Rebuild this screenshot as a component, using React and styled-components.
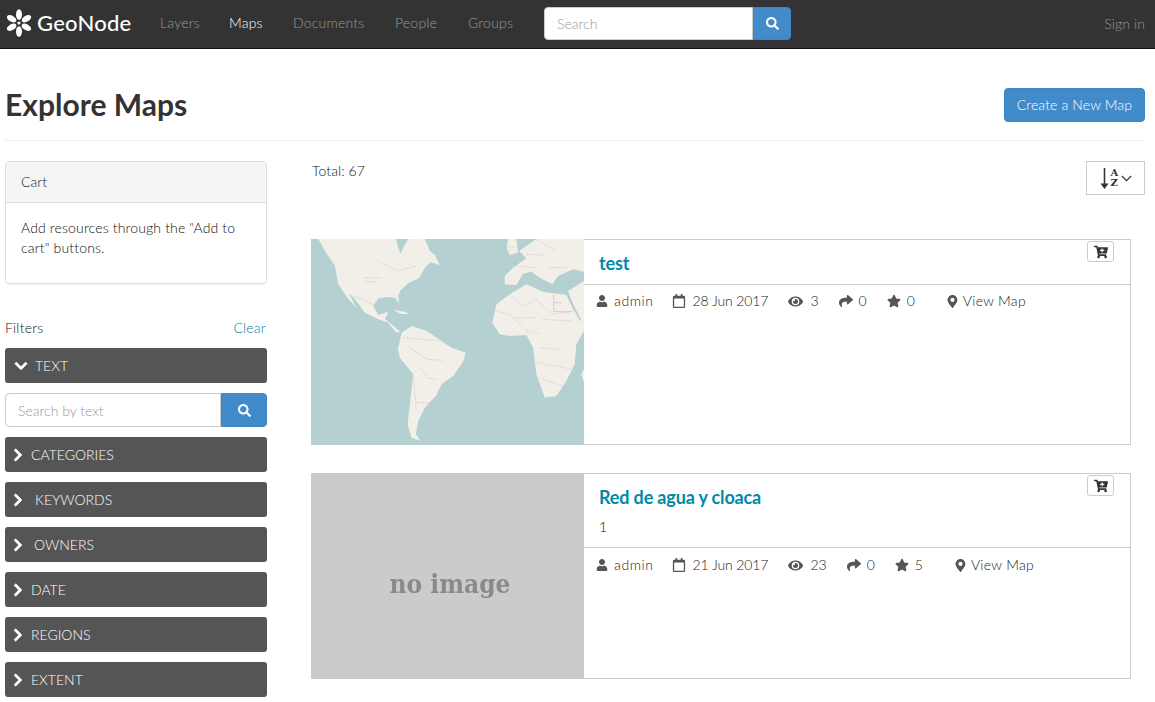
import React from 'react'
import styled, { createGlobalStyle } from 'styled-components'
import {
  FaCartPlus, FaChevronDown, FaChevronRight, FaEye, FaMapMarkerAlt, FaRegCalendar,
  FaSearch, FaShare, FaStar, FaUser,
} from 'react-icons/fa'

const GlobalStyle = createGlobalStyle`
  * { box-sizing: border-box; }
  html, body { margin: 0; padding: 0; background: #fff; }
  body {
    font-family: Lato, "Helvetica Neue", Arial, sans-serif;
    font-size: 14px;
    line-height: 20px;
    color: #333;
    height: 702px;
    overflow: hidden;
  }
`

const Navbar = styled.nav`
  display: flex;
  align-items: center;
  height: 49px;
  padding: 0 10px 2px 5px;
  background: #333;
  border-bottom: 1px solid #111;
`
const Brand = styled.a`
  display: flex;
  align-items: center;
  gap: 4px;
  width: 155px;
  color: #fff;
  font-size: 22px;
  font-weight: 500;
  letter-spacing: 0.25px;
`
const NavLink = styled.a`
  width: ${({ $w }) => $w}px;
  margin-right: 30px;
  font-size: 14px;
  font-weight: 300;
  letter-spacing: 0.2px;
  white-space: nowrap;
  color: ${({ $active }) => ($active ? '#fff' : '#999')};
`
const NavSearch = styled.div`
  display: flex;
  width: 247px;
  height: 33px;
`
const SearchInput = styled.div`
  flex: 1;
  display: flex;
  align-items: center;
  padding: 1px 12px 0;
  background: #fff;
  border: 1px solid #ccc;
  border-radius: 4px 0 0 4px;
  font-weight: 300;
  color: #999;
`
const SearchButton = styled.div`
  display: flex;
  align-items: center;
  justify-content: center;
  width: ${({ $w }) => $w}px;
  background: #428bca;
  border: 1px solid #3f85c2;
  border-radius: 0 4px 4px 0;
  color: #fff;
  font-size: 13px;
`
const SignIn = styled.a`
  margin: 2px 0 0 auto;
  font-weight: 300;
  letter-spacing: 0.1px;
  color: #999;
`

const Page = styled.div`
  padding: 0 10px 0 5px;
`
const PageHeader = styled.header`
  display: flex;
  align-items: center;
  justify-content: space-between;
  height: 92px;
  padding-top: 21px;
  border-bottom: 1px solid #eee;
`
const Title = styled.h1`
  margin: -2px 0 0;
  font-size: 30px;
  line-height: 33px;
  font-weight: 700;
  color: #333;
`
const PrimaryButton = styled.a`
  display: block;
  padding: 6px 12px;
  height: 34px;
  background: #428bca;
  border: 1px solid #3f85c2;
  border-radius: 4px;
  color: #fff;
  font-weight: 300;
  letter-spacing: 0.13px;
`
const Columns = styled.div`
  display: flex;
  margin-top: 20px;
`
const Sidebar = styled.aside`
  width: 262px;
  flex: none;
`
const Panel = styled.section`
  height: 123px;
  border: 1px solid #ddd;
  border-radius: 4px;
  box-shadow: 0 1px 1px rgba(0, 0, 0, 0.05);
`
const PanelHead = styled.div`
  height: 41px;
  padding: 10px 15px;
  background: #f5f5f5;
  border-bottom: 1px solid #ddd;
  border-radius: 3px 3px 0 0;
  font-weight: 300;
  color: #222;
`
const PanelBody = styled.div`
  padding: 15px;
  font-weight: 300;
  letter-spacing: 0.15px;
  color: #111;
`
const FiltersHead = styled.div`
  display: flex;
  justify-content: space-between;
  margin: 34px 0 10px;
  font-weight: 300;
  letter-spacing: 0.2px;
  color: #111;
`
const ClearLink = styled.a`
  color: #007f9c;
  margin-right: 1px;
`
const FilterBar = styled.div`
  display: flex;
  align-items: center;
  height: 35px;
  margin-bottom: 10px;
  padding-left: 9px;
  background: #555;
  border-radius: 3px;
  color: #fff;
  font-weight: 300;
  svg {
    font-size: 14px;
    flex: none;
    margin-left: ${({ $open }) => ($open ? 0 : -3)}px;
    stroke: currentColor;
    stroke-width: 30;
  }
`
const FilterLabel = styled.span`
  margin-left: ${({ $gap }) => $gap}px;
`
const FilterSearch = styled.div`
  display: flex;
  height: 34px;
  margin-bottom: 10px;
`
const Main = styled.main`
  flex: 1;
  padding-left: 44px;
`
const TotalRow = styled.div`
  display: flex;
  justify-content: space-between;
  height: 78px;
`
const TotalText = styled.span`
  padding-left: 1px;
  font-weight: 300;
  letter-spacing: 0.1px;
  color: #111;
`
const SortButton = styled.div`
  display: flex;
  align-items: center;
  justify-content: center;
  width: 59px;
  height: 34px;
  padding-left: 1px;
  border: 1px solid #ccc;
  color: #333;
`
const SortLetters = styled.span`
  display: flex;
  flex-direction: column;
  margin: 0 3px 0 2px;
  font-family: "DejaVu Serif", serif;
  font-size: 10px;
  font-weight: 700;
  line-height: 10px;
`
const Card = styled.article`
  display: flex;
  position: relative;
  width: 820px;
  height: 206px;
  margin-bottom: 28px;
  border: 1px solid #ccc;
`
const Thumb = styled.div`
  display: flex;
  align-items: center;
  justify-content: center;
  width: 273px;
  height: 206px;
  margin: -1px 0 -1px -1px;
  flex: none;
  background: ${({ $bg }) => $bg};
`
const MapSvg = styled.svg`
  display: block;
  width: 273px;
  height: 206px;
`
const NoImage = styled.span`
  font-family: "DejaVu Serif", serif;
  font-stretch: condensed;
  font-weight: 700;
  font-size: 26px;
  color: #8a8a8a;
  filter: blur(0.7px);
  margin: 16px 0 0 5px;
  white-space: nowrap;
`
const CardBody = styled.div`
  flex: 1;
`
const CardHead = styled.div`
  padding: 13px 15px 11px;
  border-bottom: 1px solid #ccc;
`
const CardTitle = styled.h4`
  margin: 0;
  font-size: 18px;
  line-height: 20px;
  font-weight: 700;
  letter-spacing: -0.15px;
  color: #0089a8;
`
const CardAbstract = styled.p`
  margin: 10px 0 0;
  height: 19px;
  font-weight: 300;
  color: #111;
`
const Meta = styled.ul`
  display: flex;
  gap: 20px;
  margin: 0;
  padding: ${({ $tall }) => ($tall ? 7 : 6)}px 12px 6px;
  list-style: none;
`
const MetaItem = styled.li`
  display: flex;
  align-items: center;
  margin-left: ${({ $push }) => ($push ? 11 : 0)}px;
  font-weight: 300;
  color: #222;
  letter-spacing: ${({ $ls }) => $ls || 0}px;
`
const MetaIcon = styled.span`
  display: flex;
  align-items: center;
  width: ${({ $w }) => $w}px;
  margin-left: ${({ $shift }) => $shift || 0}px;
  flex: none;
  color: #555;
  font-size: ${({ $size }) => $size || 13}px;
`
const CartButton = styled.div`
  position: absolute;
  top: 1px;
  right: 16px;
  display: flex;
  align-items: center;
  justify-content: center;
  width: 27px;
  height: 21px;
  border: 1px solid #ccc;
  border-radius: 3px;
  background: #fff;
  color: #333;
  font-size: 14px;
`

const GeoLogo = () => (
  <svg width="28" height="28" viewBox="0 0 28 28">
    {[0, 60, 120, 180, 240, 300].map((a) => (
      <ellipse key={a} cx="14" cy="5.5" rx="3" ry="5.2" fill="#fff" transform={`rotate(${a} 14 14)`} />
    ))}
    <circle cx="14" cy="14" r="1.6" fill="#fff" />
  </svg>
)

const SortArrow = () => (
  <svg width="9" height="21" viewBox="0 0 9 21">
    <path d="M4.5 0 V19" stroke="#333" strokeWidth="1.6" />
    <path d="M0.5 15.5 H8.5 L4.5 21 Z" fill="#333" />
  </svg>
)

const SortCaret = () => (
  <svg width="11" height="7" viewBox="0 0 11 7">
    <path d="M0.8 1 L5.5 5.6 L10.2 1" stroke="#333" strokeWidth="1.2" fill="none" />
  </svg>
)

// hand drawn thumbnail of the map tile
const WorldMap = () => (
  <MapSvg viewBox="3 14 820 618" preserveAspectRatio="none">
    <rect x="0" y="0" width="830" height="640" fill="#b5d0d0" />
    <g fill="#f2efe9" style={{ filter: 'blur(0.6px)' }}>
      <path d="M25 14 L258 14 L264 34 L272 58 L282 36 L296 14 L345 14 L360 50 L375 62 L390 92 L362 84 L345 100 L328 130 L296 146 L272 168 L265 185 L268 208 L256 190 L232 188 L205 192 L190 215 L205 242 L235 232 L225 255 L245 270 L272 293 L260 295 L235 265 L205 255 L165 235 L135 195 L118 178 L140 222 L112 190 L85 150 L75 95 L45 50 Z" />
      <path d="M275 295 L305 275 L350 290 L395 320 L425 340 L468 355 L460 382 L430 425 L395 450 L380 482 L345 520 L325 560 L318 600 L332 620 L305 610 L293 570 L300 510 L310 420 L270 370 L264 345 Z" />
      <path d="M600 180 L650 150 L700 172 L770 182 L792 228 L823 270 L823 290 L800 330 L795 390 L770 440 L740 485 L705 490 L680 420 L670 340 L650 302 L600 305 L570 300 L547 265 L560 210 Z" />
      <path d="M610 100 L650 72 L628 50 L680 14 L823 14 L823 112 L790 105 L745 125 L728 150 L690 130 L665 112 L640 118 L620 152 L585 150 L585 125 Z" />
      <path d="M595 14 L620 14 L625 55 L600 62 L590 40 Z" />
      <path d="M775 170 L823 140 L823 270 L800 240 Z" />
      <path d="M815 420 L823 405 L823 445 Z" />
      <path d="M250 226 L285 232 L300 240 L270 238 Z" />
    </g>
    <path d="M776 185 L812 258" stroke="#b5d0d0" strokeWidth="5" fill="none" />
    <g fill="none" stroke="#c9a8cc" strokeWidth="2" strokeDasharray="5 4" opacity="0.8">
      <path d="M205 80 L262 110 L320 95 M120 180 L200 215 M160 130 L215 130 M165 142 L205 142" />
      <path d="M280 310 L390 320 M300 340 L350 375 L400 378 M330 400 L355 432 L380 435 M320 505 L360 505 M310 430 L320 530" />
      <path d="M605 185 L640 215 L680 195 L730 240 L790 230 M560 230 L600 240 L660 300 M610 250 L680 250 M700 255 L790 260 M650 285 L690 300 M690 340 L750 345 M680 385 L790 405 M690 430 L770 460" />
      <path d="M650 60 L700 62 M620 95 L680 100 M720 100 L770 100 M680 15 L740 50 M760 140 L810 142 M580 38 L620 38" />
      <path d="M732 180 L732 232 L785 232 M732 205 L755 205" strokeDasharray="none" />
    </g>
  </MapSvg>
)

const navLinks = [
  { label: 'Layers', w: 39 },
  { label: 'Maps', w: 34, active: true },
  { label: 'Documents', w: 72 },
  { label: 'People', w: 43 },
  { label: 'Groups', w: 46 },
]

const filters = [
  { label: 'CATEGORIES', gap: 6 },
  { label: 'KEYWORDS', gap: 10 },
  { label: 'OWNERS', gap: 9 },
  { label: 'DATE', gap: 6 },
  { label: 'REGIONS', gap: 6 },
  { label: 'EXTENT', gap: 6 },
]

const cards = [
  { id: 1, title: 'test', user: 'admin', date: '28 Jun 2017', views: 3, shares: 0, rating: 0 },
  { id: 2, title: 'Red de agua y cloaca', abstract: '1', user: 'admin', date: '21 Jun 2017', views: 23, shares: 0, rating: 5 },
]

const App = () => {
  return (
    <>
      <GlobalStyle />
      <Navbar>
        <Brand><GeoLogo />GeoNode</Brand>
        {navLinks.map((l) => (
          <NavLink key={l.label} $w={l.w} $active={l.active}>{l.label}</NavLink>
        ))}
        <NavSearch>
          <SearchInput>Search</SearchInput>
          <SearchButton $w={38}><FaSearch /></SearchButton>
        </NavSearch>
        <SignIn>Sign in</SignIn>
      </Navbar>
      <Page>
        <PageHeader>
          <Title>Explore Maps</Title>
          <PrimaryButton>Create a New Map</PrimaryButton>
        </PageHeader>
        <Columns>
          <Sidebar>
            <Panel>
              <PanelHead>Cart</PanelHead>
              <PanelBody>Add resources through the "Add to cart" buttons.</PanelBody>
            </Panel>
            <FiltersHead>Filters<ClearLink>Clear</ClearLink></FiltersHead>
            <FilterBar $open><FaChevronDown /><FilterLabel $gap={7}>TEXT</FilterLabel></FilterBar>
            <FilterSearch>
              <SearchInput>Search by text</SearchInput>
              <SearchButton $w={46}><FaSearch /></SearchButton>
            </FilterSearch>
            {filters.map((f) => (
              <FilterBar key={f.label}><FaChevronRight /><FilterLabel $gap={f.gap}>{f.label}</FilterLabel></FilterBar>
            ))}
          </Sidebar>
          <Main>
            <TotalRow>
              <TotalText>Total: 67</TotalText>
              <SortButton>
                <SortArrow />
                <SortLetters><span>A</span><span>Z</span></SortLetters>
                <SortCaret />
              </SortButton>
            </TotalRow>
            {cards.map((c) => (
              <Card key={c.id}>
                <Thumb $bg={c.abstract ? '#cbcbcb' : '#b5d0d0'}>
                  {c.abstract ? <NoImage>no image</NoImage> : <WorldMap />}
                </Thumb>
                <CardBody>
                  <CardHead>
                    <CardTitle>{c.title}</CardTitle>
                    {c.abstract && <CardAbstract>{c.abstract}</CardAbstract>}
                  </CardHead>
                  <Meta $tall={!!c.abstract}>
                    <MetaItem $ls={0.6}><MetaIcon $w={18} $size={12}><FaUser /></MetaIcon>{c.user}</MetaItem>
                    <MetaItem $ls={-0.1}><MetaIcon $w={21} $shift={-2} $size={14}><FaRegCalendar /></MetaIcon>{c.date}</MetaItem>
                    <MetaItem><MetaIcon $w={22} $size={15}><FaEye /></MetaIcon>{c.views}</MetaItem>
                    <MetaItem><MetaIcon $w={20} $size={14}><FaShare /></MetaIcon>{c.shares}</MetaItem>
                    <MetaItem><MetaIcon $w={20} $size={14}><FaStar /></MetaIcon>{c.rating}</MetaItem>
                    <MetaItem $push $ls={0.3}><MetaIcon $w={17} $size={13}><FaMapMarkerAlt /></MetaIcon>View Map</MetaItem>
                  </Meta>
                </CardBody>
                <CartButton><FaCartPlus /></CartButton>
              </Card>
            ))}
          </Main>
        </Columns>
      </Page>
    </>
  )
}

export default App
